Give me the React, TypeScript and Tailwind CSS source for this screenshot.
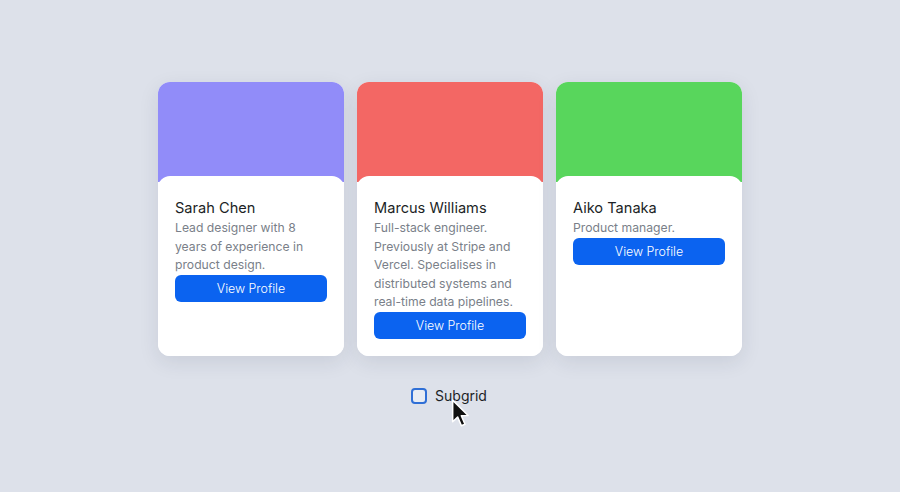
import React from 'react'

interface Person {
  name: string
  bio: string
  color: string
}

const people: Person[] = [
  {
    name: 'Sarah Chen',
    bio: 'Lead designer with 8 years of experience in product design.',
    color: 'bg-[#918cf9]',
  },
  {
    name: 'Marcus Williams',
    bio: 'Full-stack engineer. Previously at Stripe and Vercel. Specialises in distributed systems and real-time data pipelines.',
    color: 'bg-[#f36764]',
  },
  {
    name: 'Aiko Tanaka',
    bio: 'Product manager.',
    color: 'bg-[#58d65c]',
  },
]

function ProfileCard({ person }: { person: Person }) {
  return (
    <div className="flex w-[186px] flex-col overflow-hidden rounded-xl bg-white shadow-[0_6px_20px_rgba(30,41,70,0.10)]">
      <div className={`h-[100px] ${person.color}`} />
      <div className="-mt-[6px] flex-1 rounded-t-xl bg-white px-[17px] pt-[21px] pb-[17px]">
        <h3 className="text-[14.6px] leading-[22px] text-[#1c1f26]">{person.name}</h3>
        <p className="text-[12.2px] leading-[18.5px] text-[#7a7f89]">{person.bio}</p>
        <button className="h-[27px] w-full rounded-md bg-[#0b63f0] text-[12.4px] font-light text-white">
          View Profile
        </button>
      </div>
    </div>
  )
}

function Cursor() {
  return (
    <svg
      className="pointer-events-none absolute left-[451px] top-[398px]"
      width="20"
      height="32"
      viewBox="0 0 18 28"
    >
      <path
        d="M1.5 1.5 L1.5 21 L6 16.8 L9.4 24.6 L12.6 23.2 L9.3 15.6 L15.4 15.4 Z"
        fill="#111"
        stroke="#fff"
        strokeWidth="1.4"
        strokeLinejoin="round"
      />
    </svg>
  )
}

export default function App() {
  return (
    <div
      className="relative flex h-[492px] w-[900px] flex-col items-center bg-[#dde1ea] pt-[82px]"
      style={{ fontFamily: 'Inter, "Noto Sans", sans-serif' }}
    >
      <div className="flex items-stretch gap-[13px]">
        {people.map((p) => (
          <ProfileCard key={p.name} person={p} />
        ))}
      </div>
      <label className="mt-[32px] flex items-center gap-2 pr-[2px]">
        <span className="size-[16px] rounded-[4px] border-2 border-[#2f6fd6] bg-[#e8ecf3]" />
        <span className="text-[14px] leading-[16px] text-[#1c1f26]">Subgrid</span>
      </label>
      <Cursor />
    </div>
  )
}
